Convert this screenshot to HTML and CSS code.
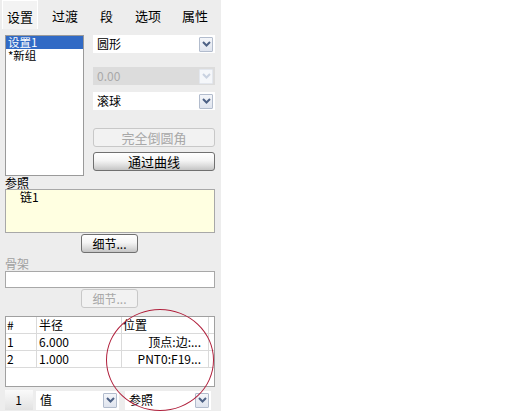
FILE: index.html
```html
<!DOCTYPE html>
<html>
<head>
<meta charset="utf-8">
<link rel="stylesheet" href="styles.css">
</head>
<body>
<div class="panel">
  <div class="tabs">
    <div class="tab active">设置</div>
    <div class="tab t2">过渡</div>
    <div class="tab t3">段</div>
    <div class="tab t4">选项</div>
    <div class="tab t5">属性</div>
  </div>
  <div class="top">
    <div class="list">
      <div class="item sel">设置1</div>
      <div class="item">*新组</div>
    </div>
    <div class="right">
      <div class="combo c1"><span class="val">圆形</span><span class="arrow"><svg width="9" height="6" viewBox="0 0 9 6"><path d="M1 1 L4.5 4.5 L8 1" fill="none" stroke="#4d6185" stroke-width="2"/></svg></span></div>
      <div class="combo dis c2"><span class="val">0.00</span><span class="arrow"><svg width="9" height="6" viewBox="0 0 9 6"><path d="M1 1 L4.5 4.5 L8 1" fill="none" stroke="#c9d2e0" stroke-width="2"/></svg></span></div>
      <div class="combo c3"><span class="val">滚球</span><span class="arrow"><svg width="9" height="6" viewBox="0 0 9 6"><path d="M1 1 L4.5 4.5 L8 1" fill="none" stroke="#4d6185" stroke-width="2"/></svg></span></div>
      <div class="btn wide dis b1">完全倒圆角</div>
      <div class="btn wide b2">通过曲线</div>
    </div>
  </div>
  <div class="label">参照</div>
  <div class="refbox"><span>链1</span></div>
  <div class="btnrow"><div class="btn small">细节...</div></div>
  <div class="label gray">骨架</div>
  <div class="input"></div>
  <div class="btnrow"><div class="btn small dis">细节...</div></div>
  <div class="table">
    <div class="row head"><div class="c ca">#</div><div class="c cb">半径</div><div class="c cc">位置</div><div class="c cd"></div></div>
    <div class="row"><div class="c ca">1</div><div class="c cb">6.000</div><div class="c cc r">顶点:边:...</div><div class="c cd"></div></div>
    <div class="row"><div class="c ca">2</div><div class="c cb">1.000</div><div class="c cc r">PNT0:F19...</div><div class="c cd"></div></div>
  </div>
  <div class="bottom">
    <div class="num">1</div>
    <div class="combo bc1"><span class="val">值</span><span class="arrow"><svg width="9" height="6" viewBox="0 0 9 6"><path d="M1 1 L4.5 4.5 L8 1" fill="none" stroke="#4d6185" stroke-width="2"/></svg></span></div>
    <div class="combo bc2"><span class="val">参照</span><span class="arrow"><svg width="9" height="6" viewBox="0 0 9 6"><path d="M1 1 L4.5 4.5 L8 1" fill="none" stroke="#4d6185" stroke-width="2"/></svg></span></div>
  </div>
  <div class="circle"></div>
</div>
</body>
</html>
```
FILE: styles.css
```css
* { box-sizing: border-box; }
html, body { margin: 0; padding: 0; background: #fff; }
body { width: 512px; height: 411px; overflow: hidden; font-family: "Noto Sans CJK SC", "DejaVu Sans", sans-serif; font-size: 12px; color: #000; }
.panel { position: relative; width: 221px; height: 411px; background: #ededed; padding: 0 6px 0 5px; display: flex; flex-direction: column; }
.tabs { display: flex; height: 33px; margin-left: -3px; padding-top: 3px; white-space: nowrap; }
.tab { height: 26px; line-height: 26px; font-size: 13px; padding: 0; white-space: nowrap; }
.t2 { margin-left: 14px; }
.t3 { margin-left: 22px; }
.t4 { margin-left: 22px; }
.t5 { margin-left: 21px; }
.tab.active { background: #f3f3f3; border: 1px solid #fff; border-bottom: none; padding: 0 4px; margin-top: -3px; height: 29px; line-height: 32px; }
.top { display: flex; gap: 9px; margin-top: 2px; }
.list { width: 79px; height: 141px; background: #fff; border: 1px solid #9a9a9a; padding: 0; }
.item { height: 13px; line-height: 13px; padding-left: 2px; font-size: 11.5px; }
.item.sel { background: #316ac5; color: #fff; }
.right { width: 122px; display: flex; flex-direction: column; }
.combo { height: 18px; background: #fff; display: flex; align-items: center; justify-content: space-between; padding: 0 1px 0 3px; border: 1px solid #fff; }
.combo .val { font-size: 12px; line-height: 16px; }
.combo .arrow { width: 14px; height: 15px; border: 1px solid #b2bccd; background: linear-gradient(#f4f6fa, #dfe4ee); display: flex; align-items: center; justify-content: center; border-radius: 1px; }
.combo.dis { background: #dcdcdc; border-color: #dcdcdc; color: #a9a9a9; }
.combo.dis .arrow { background: #f5f7fa; border-color: #e3e7ee; }
.c2 { margin-top: 14px; }
.c3 { margin-top: 7px; }
.btn { border: 1px solid #707070; border-radius: 3px; background: linear-gradient(#ffffff 0%, #f4f4f4 45%, #dcdcdc 75%, #c4c4c4 100%); display: flex; align-items: center; justify-content: center; font-size: 13px; }
.btn.dis { border-color: #c8c8c8; background: #f2f2f2; color: #a8a8a8; }
.wide { height: 19px; }
.b1 { margin-top: 18px; }
.b2 { margin-top: 5px; }
.label { height: 13px; line-height: 13px; margin-top: 0px; font-size: 12px; }
.label.gray { color: #a0a0a0; margin-top: 4px; }
.refbox { height: 44px; margin-top: 0; background: #ffffe1; border: 1px solid #a8a8a8; padding: 0 0 0 14px; line-height: 13px; font-size: 12px; }
.btnrow { display: flex; justify-content: center; margin-top: 1px; padding-right: 1px; }
.small { width: 57px; height: 19px; font-size: 12px; }
.input { height: 17px; background: #fff; border: 1px solid #a8a8a8; margin-top: 1px; }
.table { margin-top: 8px; height: 71px; background: #fff; border: 1px solid #a0a0a0; }
.row { display: flex; height: 17px; border-bottom: 1px solid #dadada; }
.row.head { height: 17px; }
.c { height: 100%; line-height: 16px; font-size: 12px; border-right: 1px solid #dadada; padding-left: 1px; }
.ca { width: 31px; }
.cb { width: 85px; padding-left: 2px; }
.cc { width: 87px; padding-left: 1px; }
.cc.r { text-align: right; padding-right: 7px; }
.cd { flex: 1; border-right: none; }
.bottom { display: flex; align-items: center; height: 20px; margin-top: 3px; }
.num { width: 28px; height: 20px; background: linear-gradient(#fafafa, #e2e2e2); text-align: right; padding-right: 11px; line-height: 20px; font-size: 12px; }
.bc1 { width: 83px; margin-left: 3px; height: 19px; }
.bc2 { width: 86px; margin-left: 6px; height: 19px; }
.circle { position: absolute; left: 106px; top: 309px; width: 108px; height: 102px; border: 1px solid #b0203c; border-radius: 50%; }
```
